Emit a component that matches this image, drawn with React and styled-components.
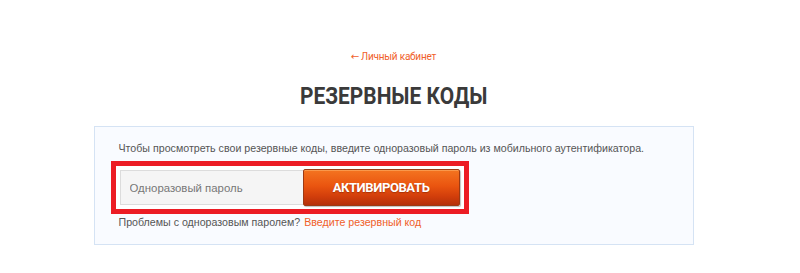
import React from "react";
import styled, { createGlobalStyle } from "styled-components";

const GlobalStyle = createGlobalStyle`
  body {
    margin: 0;
    background: #ffffff;
    font-family: "Liberation Sans", Arial, sans-serif;
  }
`;

const Page = styled.div`
  display: flex;
  flex-direction: column;
  align-items: center;
  padding: 51px 13px 0 0;
`;

const BackLink = styled.a`
  font-family: Roboto, "Liberation Sans", sans-serif;
  font-size: 10px;
  line-height: 12px;
  letter-spacing: -0.2px;
  color: #f0602a;
  text-decoration: none;
`;

const Arrow = styled.span`
  font-family: "DejaVu Sans", sans-serif;
  font-size: 10px;
  margin-right: 2px;
`;

const Title = styled.h1`
  margin: 19px 0 0;
  font-family: Roboto, "Liberation Sans", sans-serif;
  font-weight: 700;
  font-size: 24px;
  line-height: 28px;
  color: #3a3a3a;
  transform: scaleX(0.87);
`;

const Panel = styled.div`
  box-sizing: border-box;
  width: 600px;
  margin-top: 16px;
  padding: 14px 24px 15px 24px;
  background: #f9fbff;
  border: 1px solid #d5e3f4;
`;

const Hint = styled.div`
  font-size: 10.65px;
  line-height: 14px;
  color: #555555;
`;

const Highlight = styled.div`
  display: inline-flex;
  align-items: center;
  margin: 6px 0 0 -8px;
  padding: 4px;
  border: 5px solid #ec1c24;
  background: #ffffff;
`;

const CodeInput = styled.input`
  box-sizing: border-box;
  width: 183px;
  height: 35px;
  padding: 0 9px;
  border: 1px solid #dcdcdc;
  border-right: none;
  background: #f5f5f5;
  font-family: "Liberation Sans", Arial, sans-serif;
  font-size: 11.4px;
  color: #444;
  outline: none;

  &::placeholder {
    color: #777777;
  }
`;

const ActivateButton = styled.button`
  box-sizing: border-box;
  width: 157px;
  height: 37px;
  margin: -1px 0;
  border: 1px solid #9c3a14;
  border-radius: 2px;
  background: linear-gradient(#f47420 0%, #ea5510 45%, #d23e0b 75%, #b5300a 100%);
  box-shadow: 1px 1px 1px rgba(0, 0, 0, 0.25), inset 0 1px 0 rgba(255, 190, 120, 0.5);
  font-family: Roboto, "Liberation Sans", sans-serif;
  font-weight: 700;
  font-size: 13px;
  letter-spacing: -0.4px;
  color: #ffffff;
  text-shadow: 0 1px 1px rgba(120, 30, 0, 0.5);
  cursor: pointer;
`;

const Footer = styled.div`
  margin-top: 1px;
  font-size: 10.65px;
  line-height: 14px;
  color: #555555;
`;

const OrangeLink = styled.a`
  margin-left: 4px;
  color: #f0602a;
  text-decoration: none;
`;

export default function App() {
  return (
    <>
      <GlobalStyle />
      <Page>
        <BackLink href="#">
          <Arrow>←</Arrow>Личный кабинет
        </BackLink>
        <Title>РЕЗЕРВНЫЕ КОДЫ</Title>
        <Panel>
          <Hint>
            Чтобы просмотреть свои резервные коды, введите одноразовый пароль из мобильного аутентификатора.
          </Hint>
          <Highlight>
            <CodeInput placeholder="Одноразовый пароль" />
            <ActivateButton>АКТИВИРОВАТЬ</ActivateButton>
          </Highlight>
          <Footer>
            Проблемы с одноразовым паролем?
            <OrangeLink href="#">Введите резервный код</OrangeLink>
          </Footer>
        </Panel>
      </Page>
    </>
  );
}
